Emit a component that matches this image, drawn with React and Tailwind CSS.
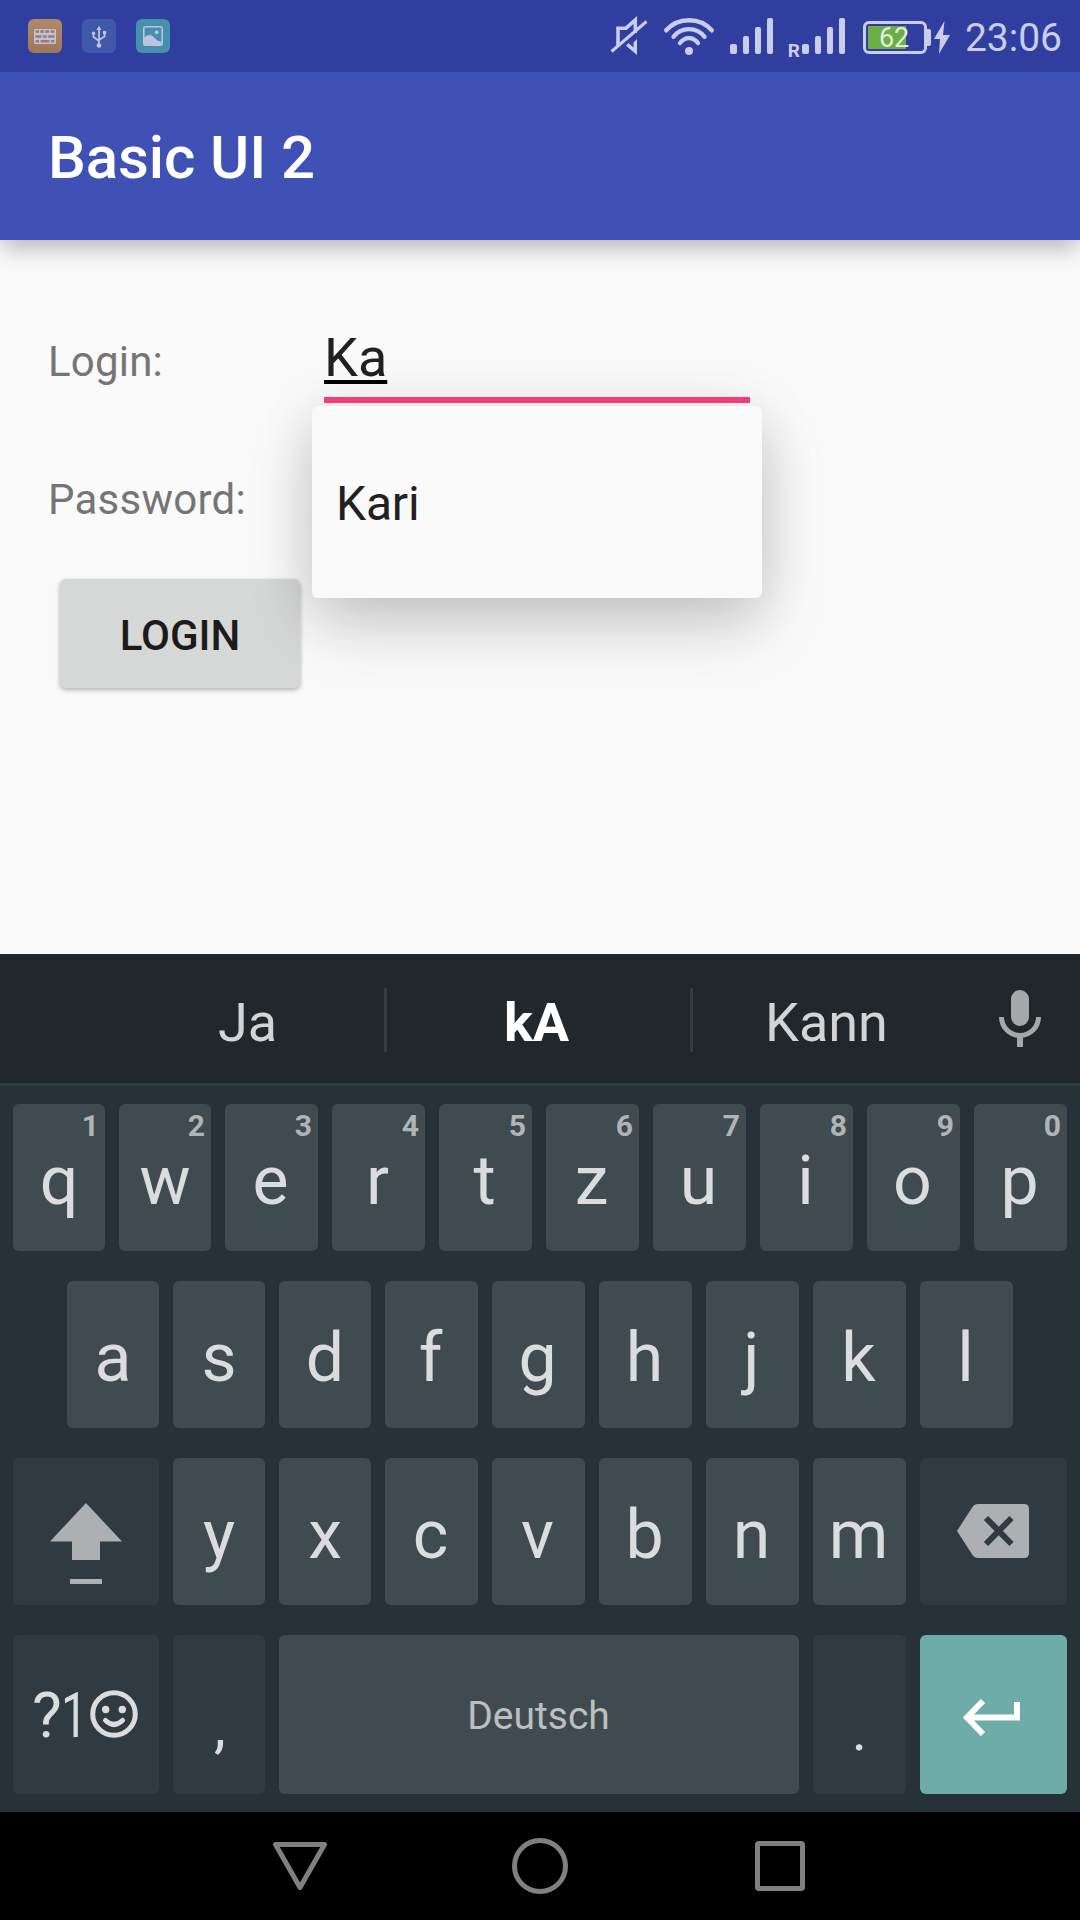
import React from "react";

const rowOne = [
  ["q", "1"], ["w", "2"], ["e", "3"], ["r", "4"], ["t", "5"],
  ["z", "6"], ["u", "7"], ["i", "8"], ["o", "9"], ["p", "0"],
];
const rowTwo = ["a", "s", "d", "f", "g", "h", "j", "k", "l"];
const rowThree = ["y", "x", "c", "v", "b", "n", "m"];

function Key({ label, hint, narrow }) {
  return (
    <div className={`relative h-[147px] shrink-0 rounded-[6px] bg-[#404b50] pt-[37px] text-center text-[68px] leading-[80px] text-[#dadcdd] ${narrow ? "w-[92px]" : "w-[93px] pr-[2px]"}`}>
      {label}
      {hint && (
        <span className="absolute right-[6px] top-[4px] text-[30px] font-bold leading-[36px] text-[#b0b4b7]">{hint}</span>
      )}
    </div>
  );
}

function StatusBar() {
  return (
    <div className="flex h-[72px] items-start bg-[#303f9f] text-[#c9cdea]">
      <div className="ml-7 mt-[19px] flex gap-5">
        <svg width="34" height="34" viewBox="0 0 34 34">
          <defs>
            <linearGradient id="orange" x1="0" y1="0" x2="0" y2="1">
              <stop offset="0" stopColor="#b28a69" />
              <stop offset="1" stopColor="#9c7758" />
            </linearGradient>
          </defs>
          <rect width="34" height="34" rx="6" fill="url(#orange)" />
          <rect x="6" y="10" width="22" height="15" rx="1" fill="#bcc2e0" />
          <path d="M7.500 11.300h3.500v2.500H7.500zM12.300 11.300h3.500v2.500h-3.500zM17.200 11.300h3.800v2.500h-3.800zM22.500 11.300h4v2.500h-4zM7.500 16.200h6v2.500h-6zM15 16.200h3.800v2.500H15zM20.200 16.200h6.300v2.500h-6.300zM7.500 21h3.500v2.500H7.500zM12.500 21h9v2.500h-9zM23 21h3.500v2.500H23z" fill="#a27d5f" />
        </svg>
        <svg width="34" height="34" viewBox="0 0 34 34">
          <rect width="34" height="34" rx="6" fill="#3f58a9" />
          <g stroke="#bcc2e0" strokeWidth="1.8" fill="none">
            <path d="M17 9v18M11.500 14.500v3.500l5.500 4M22.500 13.500v4l-5.500 3.500" />
          </g>
          <path d="M17 6.500l2.500 4.500h-5z" fill="#bcc2e0" />
          <circle cx="17" cy="26.500" r="2.300" fill="#bcc2e0" />
          <circle cx="11.500" cy="14.300" r="1.700" fill="#bcc2e0" />
          <rect x="21" y="12" width="3.200" height="3.200" fill="#bcc2e0" />
        </svg>
        <svg width="34" height="34" viewBox="0 0 34 34">
          <rect width="34" height="34" rx="6" fill="#468fad" />
          <rect x="7.800" y="7.800" width="18.400" height="18.400" rx="1.500" stroke="#bcc2e0" strokeWidth="1.600" fill="none" />
          <circle cx="20.700" cy="13.300" r="2" fill="#bcc2e0" />
          <path d="M8 19c3-3.500 7-4 10-.500l3.500 3 4.500 1.500v3H8z" fill="#bcc2e0" />
        </svg>
      </div>
      <div className="ml-auto mr-[18px] flex h-[72px] items-start">
        <svg className="mt-4" width="40" height="40" viewBox="610 16 40 40" fill="none" stroke="currentColor">
          <path d="M618 45.500V28.200H626L635.300 20V33" strokeWidth="3.600" />
          <path d="M637 39V55L626 45.800L628.500 43L633.500 47.500V42.500z" fill="currentColor" stroke="none" />
          <path d="M611.500 51.500L646.500 21.500" strokeWidth="3" />
        </svg>
        <svg className="ml-[12px] mt-4" width="54" height="40" viewBox="662 16 54 40" fill="none" stroke="currentColor" strokeWidth="4.4" strokeLinecap="round">
          <path d="M666.200 30.300C678 16.800 700 16.800 711.800 30.300M673.500 36.800C681 26.500 697 26.500 704.500 36.800M680 43C685 36.500 693 36.500 698 43" />
          <circle cx="689" cy="51" r="4" fill="currentColor" stroke="none" />
        </svg>
        <svg className="ml-[12px] mt-4" width="48" height="40" viewBox="728 16 48 40" fill="currentColor">
          <rect x="730" y="44" width="7" height="10" rx="2" />
          <rect x="743" y="36" width="6" height="18" rx="2" />
          <rect x="755" y="27" width="6" height="27" rx="2" />
          <rect x="767" y="18" width="6" height="36" rx="2" />
        </svg>
        <span className="ml-[12px] mt-[42px] text-[19px] font-bold leading-[18px]">R</span>
        <svg className="mt-4" width="48" height="40" viewBox="800 16 48 40" fill="currentColor">
          <rect x="802" y="44" width="7" height="10" rx="2" />
          <rect x="815" y="36" width="6" height="18" rx="2" />
          <rect x="827" y="27" width="6" height="27" rx="2" />
          <rect x="839" y="18" width="6" height="36" rx="2" />
        </svg>
        <div className="ml-[15px] mt-[21px] flex h-[33px] w-[64px] rounded-[6px] border-[3px] border-current p-[2px]">
          <div className="h-[23px] w-[38px] bg-[#6aae46] pl-[11px] text-[27px] leading-[24px] text-[#e4ecdf]">62</div>
        </div>
        <div className="mt-[29px] h-[17px] w-[4px] rounded-r-[2px] bg-current" />
        <svg className="ml-[3px] mt-[21px]" width="16" height="33" viewBox="0 0 16 33" fill="currentColor">
          <path d="M10.500 0L0 18h6L5 33 16 14H9z" />
        </svg>
        <span className="ml-[15px] mt-[15px] text-[39px] leading-[46px]">23:06</span>
      </div>
    </div>
  );
}

function LoginForm() {
  return (
    <div className="relative h-[714px] bg-[#fafafa] px-12 pt-[86px]">
      <div className="flex items-baseline">
        <div className="w-[276px] text-[42px] leading-[50px] tracking-[0.2px] text-[#757575]">Login:</div>
        <div className="h-[77px] w-[426px] border-b-[6px] border-[#ff4081] text-[54px] leading-[64px] text-[#212121]">
          <span className="underline decoration-black decoration-[3.5px] underline-offset-[4px]">Ka</span>
        </div>
      </div>
      <div className="mt-[72px] text-[42px] leading-[50px] tracking-[0.25px] text-[#757575]">Password:</div>
      <div className="ml-3 mt-[54px] h-[109px] w-[240px] rounded-[6px] bg-[#d6d8d7] pt-[32px] text-center text-[42px] font-medium leading-[50px] text-[#1b1b1b] shadow-[0_2px_5px_rgba(0,0,0,0.3)]">
        LOGIN
      </div>
      <div className="absolute left-[312px] top-[166px] h-[192px] w-[450px] rounded-[6px] bg-[#fafafa] pl-6 pt-[70px] text-[48px] leading-[56px] tracking-[-0.2px] text-[#212121] shadow-[0_28px_64px_rgba(0,0,0,0.18),0_4px_60px_rgba(0,0,0,0.09)]">
        Kari
      </div>
    </div>
  );
}

function Keyboard() {
  return (
    <div className="relative z-10 h-[858px] bg-[#263238]">
      <div className="flex h-[132px] items-start border-b-[3px] border-[#303b41] bg-[#22272b] text-[54px] leading-[64px] text-[#d3d4d5]">
        <div className="ml-[111px] mt-[37px] w-[273px] text-center">Ja</div>
        <div className="mt-[34px] h-[64px] w-[3px] bg-[#363c40]" />
        <div className="mt-[37px] w-[303px] pr-[4px] text-center font-bold text-white">kA</div>
        <div className="mt-[34px] h-[64px] w-[3px] bg-[#363c40]" />
        <div className="mt-[37px] w-[267px] text-center">Kann</div>
        <svg className="ml-[39px] mt-[36px]" width="42" height="57" viewBox="0 0 42 57" fill="#a4a8a8">
          <rect x="12" y="0" width="18" height="36" rx="9" />
          <path d="M2.500 27a18.500 18.500 0 0 0 37 0" fill="none" stroke="#a4a8a8" strokeWidth="5" />
          <path d="M18 45h6v12h-6z" />
        </svg>
      </div>
      <div className="flex flex-col gap-[30px] pt-[18px]">
        <div className="flex gap-[14px] pl-[13px]">
          {rowOne.map(([label, hint], i) => <Key key={label} label={label} hint={hint} narrow={i < 2} />)}
        </div>
        <div className="flex gap-[14px] pl-[67px]">
          {rowTwo.map((label, i) => <Key key={label} label={label} narrow={i < 3} />)}
        </div>
        <div className="flex gap-[14px] pl-[13px]">
          <div className="flex h-[147px] w-[146px] justify-center rounded-[6px] bg-[#303b41] pt-[45px]">
            <svg width="72" height="82" viewBox="0 0 72 82" fill="#acb0b3">
              <path d="M36 0L72 38.500H50V57H22V38.500H0zM20 76h32v5H20z" />
            </svg>
          </div>
          {rowThree.map((label, i) => <Key key={label} label={label} narrow={i < 2} />)}
          <div className="flex h-[147px] w-[147px] rounded-[6px] bg-[#303b41] pl-[37px] pt-[46px]">
            <svg width="72" height="54" viewBox="0 0 72 54">
              <path d="M0 27L15.500 3Q17.500 0 21 0H67Q72 0 72 5V49Q72 54 67 54H21Q17.500 54 15.500 51z" fill="#acb0b3" />
              <path d="M29 14L54.500 40M54.500 14L29 40" stroke="#303b41" strokeWidth="6" />
            </svg>
          </div>
        </div>
        <div className="flex h-[159px] gap-[14px] pl-[13px] text-[#dadcdd]">
          <div className="flex w-[146px] rounded-[6px] bg-[#303b41] pt-[44px] text-[63px] leading-[74px]">
            <span className="ml-[19px] w-[29px]">?</span>
            <span className="w-[36px] origin-left scale-x-[0.75]">1</span>
            <svg className="-ml-[7px] mt-[11px]" width="48" height="48" viewBox="0 0 48 48" fill="none" stroke="currentColor" strokeWidth="5">
              <circle cx="24" cy="24" r="21.300" />
              <path d="M15.500 30.500Q24 38.500 32.500 30.500" strokeLinecap="round" />
              <circle cx="15.700" cy="19.500" r="3.700" fill="currentColor" stroke="none" />
              <circle cx="32.300" cy="19.500" r="3.700" fill="currentColor" stroke="none" />
            </svg>
          </div>
          <div className="w-[92px] rounded-[6px] bg-[#303b41] pl-[2px] pt-[56px] text-center text-[60px] leading-[70px]">,</div>
          <div className="w-[520px] rounded-[6px] bg-[#404b50] pr-px pt-[58px] text-center text-[39px] leading-[46px] text-[#bbbfc2]">Deutsch</div>
          <div className="w-[93px] rounded-[6px] bg-[#303b41] pt-[60px] text-center text-[58px] leading-[70px]">.</div>
          <div className="w-[147px] rounded-[6px] bg-[#6eaca8] pl-[43px] pt-[63px]">
            <svg width="58" height="38" viewBox="0 0 58 38" fill="none" stroke="white" strokeWidth="6">
              <path d="M20 3L4 19.500L20 36M4 19.500H54V4" />
            </svg>
          </div>
        </div>
      </div>
    </div>
  );
}

export default function App() {
  return (
    <div className="h-[1920px] w-[1080px] overflow-hidden bg-black font-[Roboto,sans-serif]">
      <StatusBar />
      <div className="relative z-10 h-[168px] bg-[#3f51b5] pl-12 pt-[51px] text-[60px] font-medium leading-[70px] tracking-[-0.1px] text-white shadow-[0_10px_22px_-2px_rgba(0,0,0,0.28)] [clip-path:inset(0_0_-40px_0)]">
        Basic UI 2
      </div>
      <LoginForm />
      <Keyboard />
      <div className="flex h-[108px] items-center pl-[272px]">
        <svg width="56" height="56" viewBox="0 0 56 56" fill="none" stroke="#808080" strokeWidth="5" strokeLinejoin="round">
          <path d="M3.500 6.500H52.500L28 49.500z" />
        </svg>
        <div className="ml-[184px] h-[56px] w-[56px] rounded-full border-[5px] border-[#808080]" />
        <div className="ml-[187px] h-[50px] w-[50px] rounded-[4px] border-[5px] border-[#808080]" />
      </div>
    </div>
  );
}
